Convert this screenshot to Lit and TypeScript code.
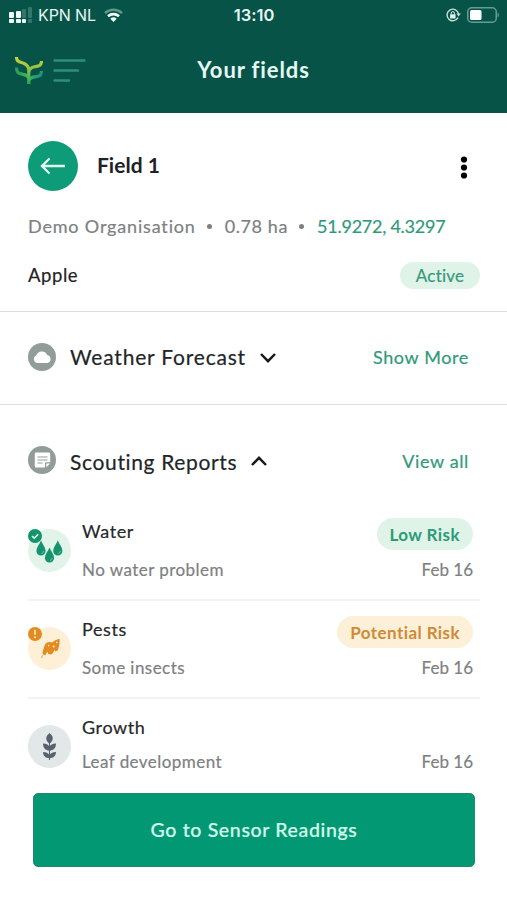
import { LitElement, html, svg, css, nothing } from "lit";
import { customElement, property } from "lit/decorators.js";

const drop = (x: number, y: number) => svg`
  <path transform="translate(${x} ${y})" fill="#14946c" d="M0 -8C1.5 -4.4 4.6 -1 4.6 2.4A4.6 4.6 0 0 1 -4.6 2.4C-4.6 -1 -1.5 -4.4 0 -8Z"/>
  <path transform="translate(${x} ${y})" fill="none" stroke="#8fd0b6" stroke-width=".8" d="M2.6 2.6A2.6 2.6 0 0 1 .6 5"/>`;

const waterIcon = svg`
  <circle cx="21.5" cy="21.5" r="21.5" fill="#e2f3ea"/>
  ${drop(13, 19.5)}${drop(21.5, 26.5)}${drop(29.8, 19.5)}
  <circle cx="7" cy="7" r="7" fill="#14946c"/>
  <path d="M4 7.2l2.2 2L10.2 5.2" fill="none" stroke="#e2f3ea" stroke-width="1.6"/>`;

const pestIcon = svg`
  <circle cx="21.5" cy="21.5" r="21.5" fill="#fdf0d6"/>
  <path fill="#e38b1f" d="M31.6 11.8C31.8 15 31.4 18.5 30.4 21.5C30 23.8 28.6 24.4 27 24.2L26.4 22.8C25.6 24.6 25 26.8 23 27.6L20.4 27L19.2 24.6L17.4 28.2L14.6 27.2C14.2 25 15.4 22.6 16 20.4C16.6 17.2 18.6 14.8 21.5 15C23.5 15.8 25.1 15.2 26.4 13.8C27.5 12.7 29.6 12.9 31.6 11.8Z"/>
  <circle cx="20.6" cy="18.6" r=".8" fill="#fdf0d6"/><circle cx="28.8" cy="15.4" r=".8" fill="#fdf0d6"/><circle cx="25.6" cy="19.4" r="1" fill="#fdf0d6"/>
  <path d="M13.2 30.8l1.8-2.6" stroke="#f2bb73" stroke-width="1.3"/>
  <circle cx="7" cy="7" r="7" fill="#e38b1f"/>
  <path d="M7 2.8v5" stroke="#fdf0d6" stroke-width="1.6"/><circle cx="7" cy="10.2" r="1" fill="#fdf0d6"/>`;

const growthIcon = svg`
  <circle cx="21.5" cy="21.5" r="21.5" fill="#e2e7e8"/>
  <g fill="#59616f">
    <path d="M21.5 8C25 11 26.6 14.5 21.5 19C16.4 14.5 18 11 21.5 8Z"/>
    <path d="M15 18.6C18.6 18.8 20.8 20 21.5 22C22.2 20 24.4 18.8 28 18.6C28 23 25.5 25.6 21.5 25.8C17.5 25.6 15 23 15 18.6Z"/>
    <path d="M15 27C18.6 27.2 20.8 28.4 21.5 30.2C22.2 28.4 24.4 27.2 28 27C27.8 31 25.5 33 21.5 33.2C17.5 33 15.2 31 15 27Z"/>
    <path d="M21 18h1v17h-1z"/>
  </g>`;

@customElement("report-row")
class ReportRow extends LitElement {
  @property() heading = "";
  @property() note = "";
  @property() date = "";
  @property() risk = "";
  @property() tone = "good";
  @property({ attribute: false }) icon: unknown = nothing;

  static styles = css`
    :host { display: flex; box-sizing: border-box; height: 98px; border-bottom: 2px solid #f3f3f4; }
    :host([last]) { border-bottom: 0; }
    .icon { width: 43px; height: 43px; margin: 26px 11px 0 0; flex: none; }
    .main { flex: 1; padding-top: 16px; }
    .side { display: flex; flex-direction: column; align-items: flex-end; padding: 15px 7px 0 0; }
    .heading { font-size: 18px; letter-spacing: .6px; line-height: 24px; color: #26282a; }
    .note, .date { font-size: 17px; line-height: 24px; color: #7d7f82; }
    .note { letter-spacing: .45px; margin-top: 15px; }
    .date { margin-top: 8px; letter-spacing: 0; }
    .date.alone { margin-top: 36px; }
    .pill { height: 32px; line-height: 33px; border-radius: 16px; padding: 0 13px; font-size: 17px; font-weight: 700; letter-spacing: .42px; -webkit-text-stroke: 0; }
    .good { background: #e0f3e9; color: #2a9c78; }
    .warn { background: #fdf0d8; color: #cf8a35; }
    :host([last]) .note { margin-top: 11px; }
  `;
  render() {
    return html`
      <svg class="icon" viewBox="0 0 43 43">${this.icon}</svg>
      <div class="main">
        <div class="heading">${this.heading}</div>
        <div class="note">${this.note}</div>
      </div>
      <div class="side">
        ${this.risk ? html`<span class="pill ${this.tone}">${this.risk}</span>` : nothing}
        <span class="date ${this.risk ? "" : "alone"}">${this.date}</span>
      </div>`;
  }
}

@customElement("app-root")
class AppRoot extends LitElement {
  static styles = css`
    :host { display: flex; flex-direction: column; height: 900px; background: #fff; font-family: Lato, "Open Sans", sans-serif; font-variant-ligatures: none; -webkit-text-stroke: .2px; white-space: nowrap; overflow: hidden; }
    svg { display: block; flex: none; }
    .top { height: 113px; background: #075348; color: #e6f8f2; -webkit-text-stroke: 0; }
    .status { height: 30px; display: grid; grid-template-columns: 1fr auto 1fr; align-items: center; padding: 0 8px 0 9px; font-family: Inter, sans-serif; font-size: 16px; }
    .carrier { display: flex; align-items: center; }
    .network { margin: 0 8px 0 6px; letter-spacing: -.1px; }
    .time { font-weight: 600; font-size: 16.5px; }
    .power { display: flex; justify-content: flex-end; align-items: center; gap: 6px; }
    .nav { height: 79px; display: grid; grid-template-columns: 1fr auto 1fr; align-items: center; padding: 0 15px; }
    .brand { display: flex; gap: 10px; }
    .title { font-size: 22px; font-weight: 700; letter-spacing: .9px; }
    .field { height: 199px; box-sizing: border-box; border-bottom: 1px solid #dcddde; padding: 28px 27px 0 28px; }
    .line { display: flex; align-items: center; }
    .name { flex: 1; margin-left: 19px; font-size: 21px; font-weight: 700; color: #1e2224; margin-top: -4px; -webkit-text-stroke: 0; }
    .dots { margin-right: 12px; }
    .meta { height: 30px; margin-top: 20px; font-size: 18px; color: #7d7f82; }
    .bullet { width: 5px; height: 5px; border-radius: 50%; background: #7d7f82; margin: 0 13px 0 11px; }
    .org { letter-spacing: .83px; }
    .area { letter-spacing: .6px; }
    .coords { color: #2f9a7a; letter-spacing: -.25px; }
    .crop { height: 28px; margin-top: 20px; font-size: 18.5px; letter-spacing: .55px; color: #1f2325; justify-content: space-between; }
    .active { height: 27px; line-height: 27px; width: 80px; text-align: center; border-radius: 14px; background: #dff3e8; color: #35987a; font-size: 17px; letter-spacing: .2px; }
    .section { display: flex; align-items: center; box-sizing: border-box; padding: 0 38px 0 28px; }
    .weather { height: 93px; padding-bottom: 3px; border-bottom: 1px solid #dcddde; }
    .scouting { height: 62px; margin-top: 24px; }
    .heading { font-size: 21px; letter-spacing: .8px; color: #222528; margin: 0 14px; }
    .scouting .heading { letter-spacing: .65px; margin-top: 2px; }
    .chevron { margin-top: 2px; }
    .link { margin-left: auto; color: #2f9a7a; font-size: 18px; letter-spacing: .63px; }
    .scouting .link { margin-top: 2px; }
    .reports { height: 302px; flex: none; padding: 12px 27px 0 28px; box-sizing: border-box; }
    .cta { height: 74px; flex: none; margin: 0 32px 0 33px; border: 1px solid #23876c; box-sizing: border-box; border-radius: 5px; background: #029874; color: #d5fbeb; font: 500 19.5px Lato, sans-serif; letter-spacing: .65px; padding: 0 0 2px; -webkit-text-stroke: .2px; }
  `;
  render() {
    return html`
      <header class="top">
        <div class="status">
          <div class="carrier">
            <svg width="23" height="17" viewBox="0 0 23 17">
              <g fill="#f2fffb"><rect y="5" width="5" height="6" rx="1"/><rect x="7" y="4" width="5" height="7" rx="1"/><rect y="12" width="5" height="4" rx="1"/><rect x="7" y="12" width="5" height="4" rx="1"/><rect x="13" y="12" width="4" height="4" rx="1"/></g>
              <g fill="#34766b"><rect x="13" y="2" width="4" height="9" rx="1"/><rect x="19" width="4" height="11" rx="1"/><rect x="19" y="12" width="4" height="4" rx="1"/></g>
            </svg>
            <span class="network">KPN NL</span>
            <svg width="19" height="14" viewBox="0 0 19 14">
              <path d="M1 5.1A12.3 12.3 0 0 1 18 5.1" fill="none" stroke="#5c978b" stroke-width="2.5"/>
              <path d="M4 8.2A8.2 8.2 0 0 1 15 8.2" fill="none" stroke="#f2fffb" stroke-width="2.6"/>
              <path d="M6.3 10.7A4.8 4.8 0 0 1 12.7 10.7L9.5 14Z" fill="#f2fffb"/>
            </svg>
          </div>
          <span class="time">13:10</span>
          <div class="power">
            <svg width="15" height="14" viewBox="0 0 15 14">
              <path d="M12.1 9.5A5.8 5.8 0 1 1 12.6 6" fill="none" stroke="#c3e3da" stroke-width="1.4"/>
              <path d="M10.4 5.4h4.4L12.6 8.4Z" fill="#c3e3da"/>
              <rect x="4" y="6.2" width="5.6" height="4.2" rx=".6" fill="#dff5ee"/>
              <path d="M5.2 6.5V5.2a1.6 1.6 0 0 1 3.2 0v1.3" fill="none" stroke="#dff5ee"/>
            </svg>
            <svg width="32" height="16" viewBox="0 0 32 16">
              <rect x=".75" y=".75" width="28.5" height="14.5" rx="4" fill="none" stroke="#659d92" stroke-width="1.5"/>
              <rect x="3" y="3" width="11.5" height="10" rx="1.5" fill="#fff"/>
              <path d="M30.6 5.5a3 3 0 0 1 0 5Z" fill="#659d92"/>
            </svg>
          </div>
        </div>
        <div class="nav">
          <div class="brand">
            <svg width="28" height="28" viewBox="0 0 28 28">
              <defs>
                <linearGradient id="leaf" x1="0" y1="0" x2="0" y2="1"><stop offset="0" stop-color="#cbd13d"/><stop offset=".45" stop-color="#8fc247"/><stop offset="1" stop-color="#23ab55"/></linearGradient>
                <linearGradient id="stem" gradientUnits="userSpaceOnUse" x1="0" y1="12" x2="28" y2="20"><stop offset="0" stop-color="#269b56"/><stop offset=".5" stop-color="#38b85c"/><stop offset="1" stop-color="#1d8889"/></linearGradient>
              </defs>
              <g fill="none" stroke-width="3.2">
                <path d="M1.5 11.5C1.5 17.5 4 17.5 8 18.3Q12.5 19 13.8 22M26.5 15C26.5 20 24 20.3 20 20.8Q15.5 21 14 24" stroke="url(#stem)"/>
                <path d="M1.5 1C1.5 6 5 5.8 8.5 7.2Q13.8 9.5 13.8 14V28M26.5 5C26.5 10 23.5 10 19.5 10.8Q14.3 12 13.8 16" stroke="url(#leaf)"/>
              </g>
            </svg>
            <svg width="33" height="28" viewBox="0 0 33 28"><path d="M1.5 4.5H31.5M1.5 14.5H25M1.5 24.5H16" stroke="#2d9079" stroke-width="2.4" stroke-linecap="round"/></svg>
          </div>
          <span class="title">Your fields</span>
        </div>
      </header>

      <section class="field">
        <div class="line">
          <svg width="50" height="50" viewBox="0 0 50 50"><circle cx="25" cy="25" r="25" fill="#0e9c78"/><path d="M37 25H14M21.5 17.5L14 25L21.5 32.5" fill="none" stroke="#e2fff4" stroke-width="2.3"/></svg>
          <span class="name">Field 1</span>
          <svg class="dots" width="8" height="26" viewBox="0 0 8 26"><circle cx="4" cy="6.5" r="3.1"/><circle cx="4" cy="14.5" r="3.1"/><circle cx="4" cy="22.5" r="3.1"/></svg>
        </div>
        <div class="line meta">
          <span class="org">Demo Organisation</span><i class="bullet"></i><span class="area">0.78 ha</span><i class="bullet"></i><span class="coords">51.9272, 4.3297</span>
        </div>
        <div class="line crop"><span>Apple</span><span class="active">Active</span></div>
      </section>

      <section class="section weather">
        <svg width="28" height="28" viewBox="0 0 28 28"><circle cx="14" cy="14" r="14" fill="#929d9a"/><path d="M8.9 20A3.9 3.9 0 0 1 8.2 12.6A5.9 5.9 0 0 1 19.2 11.9A4.2 4.2 0 0 1 19.7 20Z" fill="#fff"/></svg>
        <span class="heading">Weather Forecast</span>
        <svg class="chevron" width="16" height="10" viewBox="0 0 16 10"><path d="M1 1L8 8.2L15 1" fill="none" stroke="#171a1c" stroke-width="2.5"/></svg>
        <span class="link">Show More</span>
      </section>

      <section class="section scouting">
        <svg width="28" height="28" viewBox="0 0 28 28"><circle cx="14" cy="14" r="14" fill="#929d9a"/><path d="M8 6.5H21Q22.2 6.5 22.2 7.7V16.2H18.2Q17 16.2 17 17.4V21.5H8Q6.8 21.5 6.8 20.3V7.7Q6.8 6.5 8 6.5ZM18.3 17.5H22L18.3 21.2Z" fill="#fff"/><path d="M9.5 11H19.5M9.5 14H19.5M9.5 17H14.5" stroke="#929d9a" stroke-width="1.2"/></svg>
        <span class="heading">Scouting Reports</span>
        <svg class="chevron" width="16" height="10" viewBox="0 0 16 10"><path d="M1 9L8 1.8L15 9" fill="none" stroke="#171a1c" stroke-width="2.5"/></svg>
        <span class="link">View all</span>
      </section>

      <div class="reports">
        <report-row heading="Water" note="No water problem" date="Feb 16" risk="Low Risk" tone="good" .icon=${waterIcon}></report-row>
        <report-row heading="Pests" note="Some insects" date="Feb 16" risk="Potential Risk" tone="warn" .icon=${pestIcon}></report-row>
        <report-row last heading="Growth" note="Leaf development" date="Feb 16" .icon=${growthIcon}></report-row>
      </div>
      <button class="cta">Go to Sensor Readings</button>`;
  }
}
